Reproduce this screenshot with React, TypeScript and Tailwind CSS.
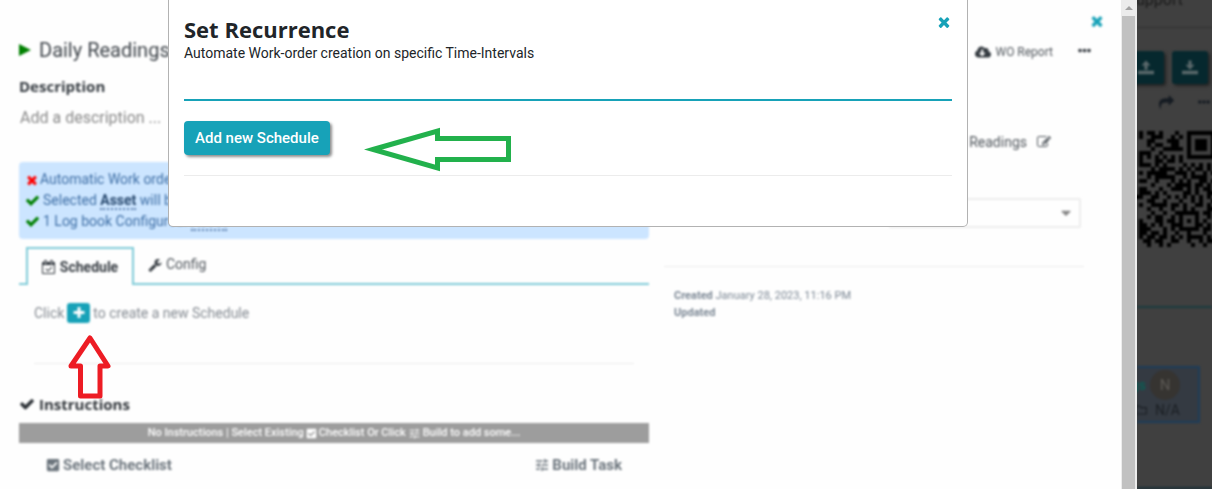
import React, { useState } from 'react';
import { FaCheckSquare, FaCloudDownloadAlt, FaEllipsisH, FaRegFolder } from 'react-icons/fa';
import { MdTune } from 'react-icons/md';

interface GlyphProps {
    name: keyof typeof GLYPHS;
    className?: string;
}

const GLYPHS = {
    times: 'M1490 1322q0 40-28 68l-136 136q-28 28-68 28t-68-28l-294-294-294 294q-28 28-68 28t-68-28l-136-136q-28-28-28-68t28-68l294-294-294-294q-28-28-28-68t28-68l136-136q28-28 68-28t68 28l294 294 294-294q28-28 68-28t68 28l136 136q28 28 28 68t-28 68l-294 294 294 294q28 28 28 68z',
    check: 'M1671 566q0 40-28 68l-724 724-136 136q-28 28-68 28t-68-28l-136-136-362-362q-28-28-28-68t28-68l136-136q28-28 68-28t68 28l294 295 656-657q28-28 68-28t68 28l136 136q28 28 28 68z',
    plus: 'M1600 736v192q0 40-28 68t-68 28h-416v416q0 40-28 68t-68 28h-192q-40 0-68-28t-28-68v-416h-416q-40 0-68-28t-28-68v-192q0-40 28-68t68-28h416v-416q0-40 28-68t68-28h192q40 0 68 28t28 68v416h416q40 0 68 28t28 68z',
    wrench: 'M448 1472q0-26-19-45t-45-19-45 19-19 45 19 45 45 19 45-19 19-45zm644-420l-682 682q-37 37-90 37-52 0-91-37l-106-108q-38-36-38-90 0-53 38-91l681-681q39 98 114.5 173.5t173.5 114.5zm634-435q0 39-23 106-47 134-164.5 217.5t-258.5 83.5q-185 0-316.5-131.5t-131.5-316.5 131.5-316.5 316.5-131.5q58 0 121.5 16.5t107.5 46.5q16 11 16 28t-16 28l-293 169v224l193 107q5-3 79-48.5t135.5-81 70.5-35.5q15 0 23.5 10t8.5 25z',
    calendar: 'M1303 964l-512 512q-10 9-23 9t-23-9l-288-288q-9-10-9-23t9-22l46-46q9-9 22-9t23 9l220 220 444-444q10-9 23-9t22 9l46 46q9 9 9 22t-9 23zm-1175 700h1408v-1024h-1408v1024zm384-1216v-288q0-14-9-23t-23-9h-64q-14 0-23 9t-9 23v288q0 14 9 23t23 9h64q14 0 23-9t9-23zm768 0v-288q0-14-9-23t-23-9h-64q-14 0-23 9t-9 23v288q0 14 9 23t23 9h64q14 0 23-9t9-23zm384-64v1280q0 52-38 90t-90 38h-1408q-52 0-90-38t-38-90v-1280q0-52 38-90t90-38h128v-96q0-66 47-113t113-47h64q66 0 113 47t47 113v96h384v-96q0-66 47-113t113-47h64q66 0 113 47t47 113v96h128q52 0 90 38t38 90z',
    edit: 'M888 1184l116-116-152-152-116 116v56h96v96h56zm440-720q-16-16-33 1l-350 350q-17 17-1 33t33-1l350-350q17-17 1-33zm80 594v190q0 119-84.5 203.5t-203.5 84.5h-832q-119 0-203.5-84.5t-84.5-203.5v-832q0-119 84.5-203.5t203.5-84.5h832q63 0 117 25 15 7 18 23 3 17-9 29l-49 49q-14 14-32 8-23-6-45-6h-832q-66 0-113 47t-47 113v832q0 66 47 113t113 47h832q66 0 113-47t47-113v-126q0-13 9-22l64-64q15-15 35-7t20 29zm-96-738l288 288-672 672h-288v-288zm444 132l-92 92-288-288 92-92q28-28 68-28t68 28l152 152q28 28 28 68t-28 68z',
    share: 'M1792 640q0 26-19 45l-512 512q-19 19-45 19t-45-19-19-45v-256h-224q-98 0-175.5 6t-154 21.5-133 42.5-105.5 69.5-80 101-48.5 138.5-17.5 181q0 55 5 123 0 6 2.5 23.5t2.5 26.5q0 15-8.5 25t-23.5 10q-16 0-28-17-7-9-13-22t-13.5-30-10.5-24q-127-285-127-451 0-199 53-333 162-403 875-403h224v-256q0-26 19-45t45-19 45 19l512 512q19 19 19 45z',
    upload: 'M896 64l512 544h-336v480h-352v-480h-336zM0 1216h1792v384h-1792z',
    download: 'M720 64h352v480h336l-512 544-512-544h336zM0 1216h1792v384h-1792z',
    caret: 'M1408 704q0 26-19 45l-448 448q-19 19-45 19t-45-19l-448-448q-19-19-19-45t19-45 45-19h896q26 0 45 19t19 45z',
};

function Glyph({ name, className }: GlyphProps) {
    return (
        <svg viewBox="0 0 1792 1792" fill="currentColor" aria-hidden="true" className={`block shrink-0 ${className ?? ''}`}>
            <path d={GLYPHS[name]} />
        </svg>
    );
}

// visible right-hand part of the asset QR code
const QR_ROWS = [
    '.#.##.#...#..#######',
    '.#..###..#.#.#.....#',
    '...##...###..#.###.#',
    '...#.##..##..#.###.#',
    '....#..#####.#.###.#',
    '.###..#......#.....#',
    '.#.#.#.#.#.#.#######',
    '.#...##.##.#........',
    '.###.#.#....#.#.#.#.',
    '....#.####.#.#.##.#.',
    '.#.#####..###.#..#.#',
    '...#.#####..#.####..',
    '.##..#...#.#.#..##.#',
    '....#...#.####.##.#.',
    '.##...#..###.#.#.##.',
    '.###.#.#....##.#..##',
    '##..##..#.#.#.#.#.#.',
    '...##..#...#..#.#..#',
    '.#..####.##.#..##.#.',
    '...#..#..#..#.#...##',
    '....#..#..######.##.',
    '...#.##..#.#...#..#.',
    '.#...##.##.#.#.#.#..',
    '.##.#.#..###...##.#.',
    '.###...#.#.#####.##.',
    '.##.##.#..#..#...#..',
    '.#.##.##.#.#.####.#.',
    '..##.##..##..#..#.##',
    '...#..#.#.....#..#..',
];

function QrCode() {
    return (
        <svg viewBox="0 0 20 29" shapeRendering="crispEdges" className="w-[80px] h-[116px] shrink-0 -mr-[3px] text-black" fill="currentColor" role="img" aria-label="Asset QR code">
            {QR_ROWS.map((row, y) =>
                row.split('').map((cell, x) => (cell === '#' ? <rect key={`${x}-${y}`} x={x} y={y} width="1" height="1" /> : null))
            )}
        </svg>
    );
}

function DetailsColumn() {
    return (
        <div className="flex-[3] min-w-0 flex flex-col">
            <h1 className="flex items-center h-7 text-[20px] text-[#3e444a]">
                <svg viewBox="0 0 12 12" className="w-3 h-3 mr-2 shrink-0" aria-hidden="true">
                    <path d="M0 0L12 6L0 12Z" fill="#008000" />
                </svg>
                Daily Readings
            </h1>
            <label htmlFor="description" className="mt-[10px] h-6 leading-6 font-['Open_Sans',sans-serif] font-bold text-[15px] text-[#343a40]">
                Description
            </label>
            <input
                id="description"
                placeholder="Add a description ..."
                className="mt-2 h-6 w-full px-px text-[16px] bg-transparent outline-none placeholder:text-[#8a8a8a]"
            />

            {/* Configuration summary */}
            <ul className="mt-8 h-[77px] py-[7px] px-[6px] rounded bg-[#cce5ff] text-[#3f6fa6] text-[14px] leading-[21px]">
                <li className="flex items-center gap-px">
                    <Glyph name="times" className="w-[14px] h-[14px] text-[#ff0000]" />
                    Automatic Work orders are off
                </li>
                <li className="flex items-center gap-[3px]">
                    <Glyph name="check" className="w-[15px] h-[15px] text-[#008000]" />
                    <span>
                        Selected <b className="text-[#294a70] border-b-2 border-dotted border-[#5a7fae]">Asset</b> will be used
                    </span>
                </li>
                <li className="flex items-center gap-[3px]">
                    <Glyph name="check" className="w-[15px] h-[15px] text-[#008000]" />
                    <span>
                        1 Log book Configured. <b className="text-[#294a70] border-b-2 border-dotted border-[#5a7fae]">Asset</b>
                    </span>
                </li>
            </ul>

            {/* Tabs */}
            <div role="tablist" className="mt-2 flex text-[14px]">
                <span className="w-[7px] border-b-2 border-[#7fcbd8]" />
                <button role="tab" aria-selected="true" className="w-[108px] h-[38px] flex items-center justify-center gap-1 border-2 border-b-0 border-[#7fcbd8] font-bold text-[#343a40]">
                    <Glyph name="calendar" className="w-[14px] h-[14px]" />
                    Schedule
                </button>
                <button role="tab" aria-selected="false" className="flex-1 flex items-center gap-1 pl-[14px] pb-px border-b-2 border-[#7fcbd8] text-[#51575d]">
                    <Glyph name="wrench" className="w-[14px] h-[14px] text-[#343a40]" />
                    Config
                </button>
            </div>
            <div className="mx-[15px] pt-[17px] pb-[39px] border-b border-[#ececec]">
                <p className="flex items-center h-[22px] text-[14px] text-[#868c93]">
                    Click
                    <button aria-label="Add schedule" className="mx-[3px] w-[23px] h-5 rounded-[3px] bg-[#17a2b8] text-white flex items-center justify-center">
                        <Glyph name="plus" className="w-[14px] h-[14px]" />
                    </button>
                    to create a new Schedule
                </p>
            </div>

            {/* Instructions */}
            <h2 className="mt-7 h-6 flex items-center gap-1 font-['Open_Sans',sans-serif] font-bold text-[15px] text-[#2f3439]">
                <Glyph name="check" className="w-4 h-4" />
                Instructions
            </h2>
            <p className="mt-[7px] h-5 flex items-center justify-center gap-[2px] bg-[#9d9d9d] text-white text-[11px] font-medium">
                No Instructions | Select Existing <FaCheckSquare className="w-[11px] h-[11px]" /> Checklist Or Click
                <MdTune className="w-[13px] h-[13px]" /> Build to add some...
            </p>
            <div className="mt-[10px] px-[27px] flex justify-between text-[15px] font-bold text-[#6c757d]">
                <button className="h-6 flex items-center gap-[3px]">
                    <FaCheckSquare className="w-[14px] h-[14px]" />
                    Select Checklist
                </button>
                <button className="h-6 flex items-center gap-[2px]">
                    <MdTune className="w-4 h-4" />
                    Build Task
                </button>
            </div>
        </div>
    );
}

function SummaryColumn() {
    return (
        <div className="flex-[2] min-w-0 flex flex-col">
            <div className="h-8 flex items-center justify-end text-[12px] text-[#51575d]">
                <button className="flex items-center gap-1">
                    <FaCloudDownloadAlt className="w-4 h-4 text-[#343a40]" />
                    WO Report
                </button>
                <button aria-label="More" className="ml-[25px] -mr-[7px] pb-1 text-[#343a40]">
                    <FaEllipsisH className="w-[13px] h-[13px]" />
                </button>
            </div>
            <div className="mt-[62px] h-6 flex items-center justify-end pr-[33px] gap-[10px] text-[14px] text-[#51575d]">
                Daily Readings
                <Glyph name="edit" className="w-[14px] h-[14px]" />
            </div>
            <div className="mt-11 mr-[3px] h-[30px] w-[192px] self-end grid items-center border-2 border-[#ececec] rounded-[2px]">
                <select aria-label="Frequency" className="col-start-1 row-start-1 w-full h-full appearance-none bg-transparent">
                    <option></option>
                </select>
                <Glyph name="caret" className="col-start-1 row-start-1 justify-self-end mr-[5px] w-4 h-4 text-[#888] pointer-events-none" />
            </div>
            <hr className="mt-[38px] border-[#ececec]" />
            <p className="mt-5 px-[10px] text-[11px] leading-[17px] text-[#7b8794]">
                <b>Created</b> January 28, 2023, 11:16 PM
                <br />
                <b>Updated</b>
            </p>
        </div>
    );
}

function Drawer() {
    return (
        <div className="flex-1 min-w-0 flex bg-[#fefefe]">
            <div className="flex-1 min-w-0 flex flex-col blur-[1px]">
                <div className="h-9 flex justify-end items-start pr-4 pt-[13px]">
                    <button aria-label="Close panel" className="text-[#17a2b8]">
                        <Glyph name="times" className="w-4 h-4" />
                    </button>
                </div>
                <div className="flex gap-[15px] pl-[19px] pr-[37px]">
                    <DetailsColumn />
                    <SummaryColumn />
                </div>
            </div>
            {/* Scrollbar */}
            <div className="w-4 shrink-0 flex flex-col bg-[#ececec]">
                <div className="h-4 flex items-center justify-center">
                    <svg viewBox="0 0 8 4" className="w-2 h-1" aria-hidden="true">
                        <path d="M0 4L4 0L8 4Z" fill="#a3a3a3" />
                    </svg>
                </div>
                <div className="flex-1 ml-px mr-[2px] bg-[#c1c1c1]" />
            </div>
        </div>
    );
}

function AssetStrip() {
    return (
        <aside className="w-[75px] shrink-0 overflow-hidden bg-[#404040]">
            <div className="flex flex-col blur-[1px] text-[#1a1a1a]">
                <div className="h-7 flex justify-end items-start pr-[29px] border-b border-[#303030] text-[16px] leading-0 whitespace-nowrap">Support</div>
                <div className="mt-[23px] pr-1 flex justify-end gap-2 text-[#5a686b]">
                    <button aria-label="Upload" className="w-9 h-[33px] shrink-0 rounded-[3px] bg-[#06282e] shadow-[2px_2px_3px_#222] flex items-center justify-center">
                        <Glyph name="upload" className="w-4 h-4" />
                    </button>
                    <button aria-label="Download" className="w-9 h-[33px] shrink-0 rounded-[3px] bg-[#06282e] shadow-[2px_2px_3px_#222] flex items-center justify-center">
                        <Glyph name="download" className="w-4 h-4" />
                    </button>
                </div>
                <div className="mt-[10px] h-4 pr-[2px] flex items-center justify-end gap-6 text-[#151b22]">
                    <Glyph name="share" className="w-[15px] h-[15px]" />
                    <FaEllipsisH className="w-3 h-3" />
                </div>
                <div className="mt-[21px] flex justify-end">
                    <QrCode />
                </div>
                <hr className="mt-[59px] border-t-2 border-[#1c3c40]" />
                <div className="mt-[58px] mr-3 h-[57px] flex flex-col items-end border-2 border-l-0 border-[#1d3d5a] bg-[#343a42]">
                    <div className="mt-[2px] mr-[18px] h-[30px] flex items-center gap-1 text-[14px] font-bold text-[#0d5c54]">
                        gs
                        <span className="w-[30px] h-[30px] rounded-full bg-[#363431] flex items-center justify-center font-normal text-[15px] text-[#5c5955]">N</span>
                    </div>
                    <div className="mr-[18px] h-5 flex items-center gap-2 text-[14px] text-[#1b1f24]">
                        <FaRegFolder className="w-3 h-3" />
                        N/A
                    </div>
                </div>
                <hr className="mt-16 border-t-2 border-[#1c3038]" />
            </div>
        </aside>
    );
}

function RecurrenceModal({ onClose }: { onClose: () => void }) {
    return (
        <div role="dialog" aria-labelledby="recurrence-title" className="relative w-[800px] h-[227px] mx-auto px-[15px] bg-white border border-t-0 border-black/30 rounded-b-[5px]">
            <div className="flex justify-between pt-[14px] pb-[38px] border-b-2 border-[#17a2b8]">
                <div>
                    <h2 id="recurrence-title" className="font-['Open_Sans',sans-serif] font-bold text-[22px] leading-[31px] text-[#212529]">
                        Set Recurrence
                    </h2>
                    <p className="text-[14px] leading-4 text-[#212529]">Automate Work-order creation on specific Time-Intervals</p>
                </div>
                <button aria-label="Close" onClick={onClose} className="self-start text-[#17a2b8]">
                    <Glyph name="times" className="w-4 h-4" />
                </button>
            </div>
            <div className="pt-5 pb-5 border-b border-[#ececec]">
                <button className="block h-[34px] px-[11px] rounded bg-[#17a2b8] text-white text-[15px] font-medium shadow-[2px_2px_3px_rgba(0,0,0,0.45)]">
                    Add new Schedule
                </button>
            </div>
            <svg viewBox="0 0 148 50" className="absolute left-[195px] top-[125px] w-[148px] h-[50px]" aria-hidden="true">
                <path d="M9 24.5L73.5 6V13.5H144.500V34.5H73.5V43Z" fill="none" stroke="#22b14c" strokeWidth="5" />
            </svg>
        </div>
    );
}

export default function App() {
    const [isOpen, setIsOpen] = useState(true);

    return (
        <div className="relative h-screen min-h-[489px] flex overflow-hidden bg-[#404040] font-[Roboto,sans-serif]">
            <Drawer />
            <AssetStrip />

            {isOpen && (
                <div className="absolute top-0 left-0 right-[76px]">
                    <RecurrenceModal onClose={() => setIsOpen(false)} />
                </div>
            )}

            {/* Pointer to the add button */}
            <svg viewBox="0 0 48 68" className="absolute left-[66px] top-[333px] w-[48px] h-[68px] pointer-events-none" aria-hidden="true">
                <path d="M24 5L42 33H34V63H14.500V33H5Z" fill="none" stroke="#ed1c24" strokeWidth="5" strokeLinejoin="round" />
            </svg>
        </div>
    );
}
